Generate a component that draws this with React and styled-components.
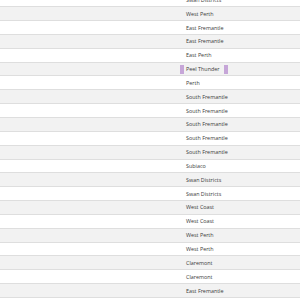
import styled, { createGlobalStyle } from 'styled-components'

const GlobalStyle = createGlobalStyle`
    html, body {
        margin: 0;
        padding: 0;
        background: #ffffff;
    }
    body {
        width: 300px;
        height: 300px;
        overflow: hidden;
    }
`

const teams = [
    'Swan Districts',
    'West Perth',
    'East Fremantle',
    'East Fremantle',
    'East Perth',
    'Peel Thunder',
    'Perth',
    'South Fremantle',
    'South Fremantle',
    'South Fremantle',
    'South Fremantle',
    'South Fremantle',
    'Subiaco',
    'Swan Districts',
    'Swan Districts',
    'West Coast',
    'West Coast',
    'West Perth',
    'West Perth',
    'Claremont',
    'Claremont',
    'East Fremantle',
    'East Fremantle',
]

export default function App() {
    return (
        <>
            <GlobalStyle />
            <Viewport>
                <Table>
                    {teams.map((team, i) => (
                        <Row key={i} $striped={i % 2 === 1}>
                            <Spacer />
                            <TeamCell>
                                <Marker $on={team === 'Peel Thunder'} />
                                <TeamName>{team}</TeamName>
                                {team === 'Peel Thunder' && <Marker $on />}
                            </TeamCell>
                        </Row>
                    ))}
                </Table>
            </Viewport>
        </>
    )
}

const Viewport = styled.div`
    width: 300px;
    height: 300px;
    overflow: hidden;
`

const Table = styled.div`
    margin-top: -6.6px;
    font-family: 'Open Sans', 'Noto Sans', sans-serif;
    font-size: 5.4px;
    color: #3a3a3a;
`

const Row = styled.div`
    display: grid;
    grid-template-columns: 180px 1fr;
    height: 12.85px;
    border-bottom: 1px solid #dedede;
    background: ${p => (p.$striped ? '#f2f2f2' : '#ffffff')};
`

const Spacer = styled.div``

const TeamCell = styled.div`
    display: flex;
    align-items: center;
    gap: 2px;
`

const Marker = styled.span`
    width: 4px;
    height: 9px;
    background: ${p => (p.$on ? '#c6a6d8' : 'transparent')};
`

const TeamName = styled.span`
    white-space: nowrap;
    margin-right: 3px;
`
